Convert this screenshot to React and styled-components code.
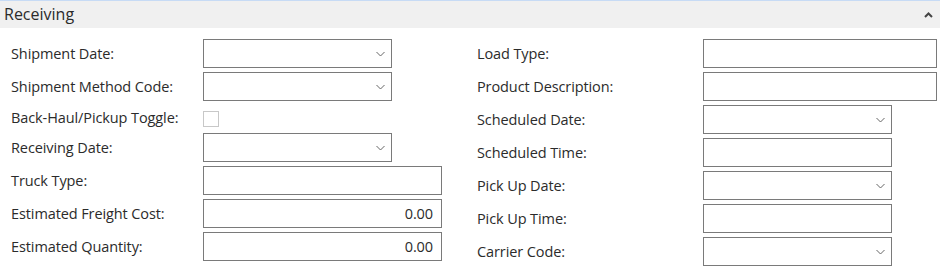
import React from "react";
import styled, { createGlobalStyle } from "styled-components";

const GlobalStyle = createGlobalStyle`
  body {
    margin: 0;
    background: #ffffff;
    font-family: "Segoe UI", "Open Sans", "Noto Sans", sans-serif;
    color: #333333;
  }
`;

// Section header
const Header = styled.div`
  display: flex;
  align-items: center;
  justify-content: space-between;
  height: 27px;
  border-top: 1px solid #c7dbf5;
  background: #f0f0f0;
  padding: 0 4px 0 4px;
`;

const Title = styled.div`
  font-size: 16px;
  color: #2b2b2b;
  line-height: 27px;
`;

const Collapse = styled.svg`
  width: 9px;
  height: 6px;
  margin-right: 3px;
`;

// Form body
const Columns = styled.div`
  display: grid;
  grid-template-columns: 466px 1fr;
  padding-top: 11px;
`;

const Column = styled.div`
  display: flex;
  flex-direction: column;
  gap: 4px;
  padding-left: 11px;
`;

const Row = styled.div`
  display: flex;
  align-items: center;
  height: ${(p) => (p.$short ? 24 : 29)}px;
`;

const Label = styled.div`
  width: ${(p) => p.$width}px;
  flex: none;
  font-size: 14.5px;
  letter-spacing: -0.1px;
  color: #2b2b2b;
  white-space: nowrap;
`;

const Field = styled.div`
  box-sizing: border-box;
  width: ${(p) => p.$width}px;
  height: 29px;
  border: 1px solid #7a7a7a;
  background: #ffffff;
  display: flex;
  align-items: center;
  justify-content: flex-end;
  padding-right: ${(p) => (p.$select ? 6 : 8)}px;
  font-size: 14.5px;
  letter-spacing: -0.1px;
  color: #2b2b2b;
`;

const Check = styled.div`
  box-sizing: border-box;
  width: 16px;
  height: 16px;
  margin-top: 4px;
  border: 1px solid #c8c8c8;
  background: #ffffff;
`;

const Chevron = () => (
  <svg width="9" height="6" viewBox="0 0 9 6">
    <polyline points="0.5,1 4.5,5 8.5,1" fill="none" stroke="#666" strokeWidth="1" />
  </svg>
);

const left = [
  { label: "Shipment Date:", kind: "select", width: 189 },
  { label: "Shipment Method Code:", kind: "select", width: 189 },
  { label: "Back-Haul/Pickup Toggle:", kind: "check" },
  { label: "Receiving Date:", kind: "select", width: 189 },
  { label: "Truck Type:", kind: "text", width: 239 },
  { label: "Estimated Freight Cost:", kind: "text", width: 239, value: "0.00" },
  { label: "Estimated Quantity:", kind: "text", width: 239, value: "0.00" },
];

const right = [
  { label: "Load Type:", kind: "text", width: 234 },
  { label: "Product Description:", kind: "text", width: 234 },
  { label: "Scheduled Date:", kind: "select", width: 189 },
  { label: "Scheduled Time:", kind: "text", width: 189 },
  { label: "Pick Up Date:", kind: "select", width: 189 },
  { label: "Pick Up Time:", kind: "text", width: 189 },
  { label: "Carrier Code:", kind: "select", width: 189 },
];

const FormRow = ({ item, labelWidth }) => (
  <Row $short={item.kind === "check"}>
    <Label $width={labelWidth}>{item.label}</Label>
    {item.kind === "check" ? (
      <Check />
    ) : (
      <Field $width={item.width} $select={item.kind === "select"}>
        {item.kind === "select" ? <Chevron /> : item.value}
      </Field>
    )}
  </Row>
);

export default function App() {
  return (
    <>
      <GlobalStyle />
      <Header>
        <Title>Receiving</Title>
        <Collapse viewBox="0 0 9 6">
          <polyline points="1,5 4.5,1.5 8,5" fill="none" stroke="#444" strokeWidth="2" />
        </Collapse>
      </Header>
      <Columns>
        <Column>
          {left.map((item) => (
            <FormRow key={item.label} item={item} labelWidth={192} />
          ))}
        </Column>
        <Column>
          {right.map((item) => (
            <FormRow key={item.label} item={item} labelWidth={226} />
          ))}
        </Column>
      </Columns>
    </>
  );
}
